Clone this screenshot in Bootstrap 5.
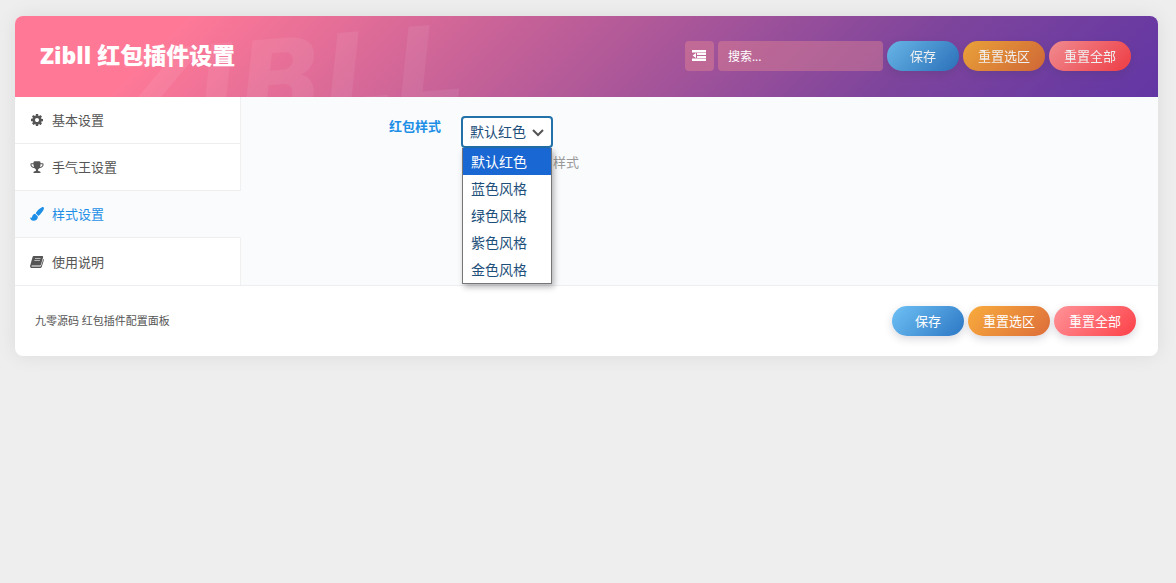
<!DOCTYPE html>
<html lang="zh-CN">
<head>
<meta charset="utf-8">
<meta name="viewport" content="width=device-width, initial-scale=1">
<title>Zibll 红包插件设置</title>
<link rel="stylesheet" href="https://cdn.jsdelivr.net/npm/bootstrap@5.3.0/dist/css/bootstrap.min.css">
<style>
  body { background: #efeeef; font-family: "Open Sans", "Noto Sans CJK SC", sans-serif; font-size: 13px; line-height: 20px; color: #555; }
  .panel { margin: 16px 18px 16px 15px; border-radius: 8px; box-shadow: 0 0 20px rgba(0,0,0,.08); background: #fff; }
  .panel-head { min-height: 81px; padding: 0 27px 1px 25px; border-radius: 8px 8px 0 0; overflow: hidden; position: relative;
    background: linear-gradient(135deg, #ff7997 14%, #b95c98 48%, #7f459c 76%, #6236a4 100%); }
  .panel-head > * { position: relative; }
  .panel-head::before { content: "ZIBLL"; position: absolute; left: 100px; top: 8px; font: italic 700 112px/112px "DejaVu Sans", sans-serif; color: rgba(255,255,255,.07); transform: rotate(-5deg); }
  .panel-title { font-size: 23px; line-height: 32px; font-weight: 800; color: #fff; padding-bottom: 3px; }
  .tool { background: rgba(238,140,145,.4); border: 0; border-radius: 4px; color: #fff; height: 30px; }
  .tool-toggle { width: 29px; }
  .tool-search { width: 165px; padding: 0 10px; font-size: 12px; }
  .tool-search::placeholder { color: #fff; opacity: 1; }
  .pill { height: 30px; border: 0; padding: 0 15px; font-size: 13px; line-height: 30px; color: #fff; box-shadow: 0 3px 8px rgba(60,60,90,.2); }
  .pill-save { min-width: 72px; background: linear-gradient(135deg, #6ec1f5, #2d77c4); }
  .pill-part { background: linear-gradient(135deg, #f8ac3d, #dd6d3a); }
  .pill-all { background: linear-gradient(135deg, #ff9499, #fd4048); }
  .in-head .pill { filter: brightness(.94); }
  .panel-body { background: #fafbfd; border-bottom: 1px solid #eceef1; }
  .side { width: 226px; flex: none; }
  .side a { display: flex; align-items: center; gap: 8px; height: 47px; padding: 0 15px; color: #555; text-decoration: none; background: #fff; border-bottom: 1px solid #eee; border-right: 1px solid #f0f0f0; }
  .side a:last-child { border-bottom: 0; }
  .side a.active { color: #1e8fe6; background: #fafbfd; border-right-color: transparent; }
  .side svg { color: #555; flex: none; }
  .side .active svg { color: #1e8fe6; }
  .fields { padding: 19px 0 0 148px; }
  .field-label { width: 72px; color: #1e8fe6; font-weight: 700; }
  .picker { position: relative; width: 92px; }
  .picker select { appearance: none; width: 100%; height: 32px; padding: 0 7px; border: 2px solid #2271a9; border-radius: 4px; background: #fff; font-size: 14px; color: #1d4f7a; display: block; outline: 0; }
  .picker svg { position: absolute; right: 9px; top: 12px; }
  .options { position: absolute; top: 32px; left: 1px; right: 1px; border: 1px solid #767676; border-top: 0; background: #fff; box-shadow: 2px 3px 6px rgba(0,0,0,.3); font-size: 14px; line-height: 27px; color: #1d4f7a; z-index: 2; }
  .options li { padding: 0 8px; }
  .options .chosen { background: #1967d2; color: #fff; }
  .hint { color: #999; padding: 4px 0 0 92px; }
  .panel-foot { min-height: 70px; padding: 0 22px 0 20px; }
  .credit { font-size: 11px; }
</style>
</head>
<body>
<main class="panel">
  <header class="panel-head in-head d-flex align-items-center justify-content-between">
    <h1 class="panel-title mb-0">Zibll 红包插件设置</h1>
    <div class="d-flex gap-1">
      <button type="button" class="tool tool-toggle p-0 d-flex align-items-center justify-content-center" aria-label="展开">
        <svg width="14" height="12" viewBox="0 0 14 12" fill="currentColor"><path d="M0 0h14v2.400H0zM5 3.100h9v2H5zM5 5.900h9v2H5zM0 8.600h14V11H0zM4 2.900v5.200L.5 5.500z"/></svg>
      </button>
      <input type="search" class="tool tool-search" placeholder="搜索..." aria-label="搜索">
      <button type="button" class="pill pill-save rounded-pill">保存</button>
      <button type="button" class="pill pill-part rounded-pill">重置选区</button>
      <button type="button" class="pill pill-all rounded-pill">重置全部</button>
    </div>
  </header>
  <div class="panel-body d-flex">
    <nav class="side">
      <a href="#basic"><svg width="14" height="12" viewBox="0 0 1536 1536" fill="currentColor"><path d="M1024 768q0-106-75-181t-181-75-181 75-75 181 75 181 181 75 181-75 75-181zm512-109v222q0 12-8 23t-20 13l-185 28q-19 54-39 91 35 50 107 138 10 12 10 25t-9 23q-27 37-99 108t-94 71q-12 0-26-9l-138-108q-44 23-91 38-16 136-29 186-7 28-36 28H657q-14 0-24.500-8.500T621 1506l-28-184q-49-16-90-37l-141 107q-10 9-25 9-14 0-25-11-126-114-165-168-7-10-7-23 0-12 8-23 15-21 51-66.500t54-70.500q-27-50-41-99L29 913q-13-2-21-12.500T0 877V655q0-12 8-23t19-13l186-28q14-46 39-92-40-57-107-138-10-12-10-24 0-10 9-23 26-36 98.500-107.500T337 136q13 0 26 10l138 107q44-23 91-38 16-136 29-186 7-28 36-28h222q14 0 24.500 8.500T915 31l28 184q49 16 90 37l142-107q9-9 24-9 13 0 25 10 129 119 165 170 7 8 7 22 0 12-8 23-15 21-51 66.500t-54 70.500q26 50 41 98l183 28q13 2 21 12.500t8 23.500z"/></svg>基本设置</a>
      <a href="#luck"><svg width="14" height="12" viewBox="0 0 1664 1536" fill="currentColor"><path d="M458 777q-74-162-74-371H128v96q0 78 94.500 162T458 777zm1078-275v-96h-256q0 209-74 371 141-29 235.500-113t94.500-162zm128-128v128q0 71-41.500 143t-112 130-173 97.500T1122 915q-42 54-95 95-38 34-52.500 72.500T960 1172q0 54 30.500 91t97.500 37q75 0 133.500 45.500T1280 1460v64q0 14-9 23t-23 9H416q-14 0-23-9t-9-23v-64q0-69 58.500-114.500T576 1300q67 0 97.500-37t30.500-91q0-51-14.500-89.500T637 1010q-53-41-95-95-113-5-215.500-44.500t-173-97.500-112-130T0 502V374q0-40 28-68t68-28h288v-96q0-66 47-113t113-47h576q66 0 113 47t47 113v96h288q40 0 68 28t28 68z"/></svg>手气王设置</a>
      <a href="#style" class="active"><svg width="14" height="14" viewBox="0 0 14 14" fill="currentColor"><path d="M12 .2c1-.4 2.200.4 1.900 1.500-.8 2.500-3.200 5.400-5.500 7.200L5.700 6.200C7.300 3.500 9.800 1.100 12 .2zM5.100 6.800l2.700 2.700c.3 2.600-1.700 4.300-4.200 4.300C1.300 13.800.3 12.300 0 10.300c1.200.8 1.700.7 2-.4C2.400 8.200 3.600 7 5.100 6.800z"/></svg>样式设置</a>
      <a href="#help"><svg width="14" height="14" viewBox="0 0 14 14"><path fill="currentColor" d="M4 1h8.300c.7 0 1 .5.800 1.200l-2.100 7.200c-.3.900-.7 1.100-1.500 1.100H2c-.7 0-.8.900.2 1.100h7.600c.8 0 1.100-.3 1.400-1.100L13.300 4c.6.3.7.7.5 1.300L11.700 12c-.3.700-.9 1-1.500 1H2c-1.500 0-2.300-1.300-1.800-2.500L2.500 2.200C2.700 1.500 3.200 1 4 1z"/><path d="M5 3.500h5.500M4.400 5.500h5.500" stroke="#fff" stroke-width=".6"/></svg>使用说明</a>
    </nav>
    <section class="fields flex-grow-1 d-flex">
      <label class="field-label" for="skin">红包样式</label>
      <div>
        <div class="picker">
          <select id="skin"><option>默认红色</option><option>蓝色风格</option><option>绿色风格</option><option>紫色风格</option><option>金色风格</option></select>
          <svg width="12" height="10" viewBox="0 0 12 10" fill="none" stroke="#555" stroke-width="2"><path d="M1 2l5 5 5-5"/></svg>
          <ul class="options list-unstyled mb-0"><li class="chosen">默认红色</li><li>蓝色风格</li><li>绿色风格</li><li>紫色风格</li><li>金色风格</li></ul>
        </div>
        <div class="hint">样式</div>
      </div>
    </section>
  </div>
  <footer class="panel-foot d-flex align-items-center justify-content-between">
    <span class="credit">九零源码 红包插件配置面板</span>
    <div class="d-flex gap-1">
      <button type="button" class="pill pill-save rounded-pill">保存</button>
      <button type="button" class="pill pill-part rounded-pill">重置选区</button>
      <button type="button" class="pill pill-all rounded-pill">重置全部</button>
    </div>
  </footer>
</main>
<script src="https://cdn.jsdelivr.net/npm/bootstrap@5.3.0/dist/js/bootstrap.bundle.min.js"></script>
</body>
</html>
